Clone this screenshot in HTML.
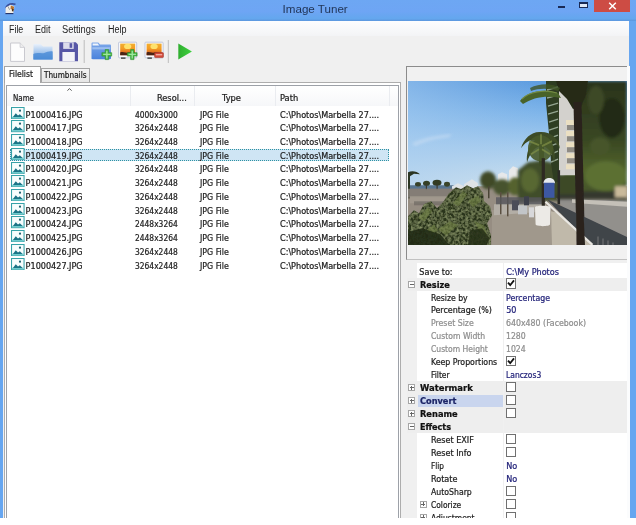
<!DOCTYPE html>
<html lang="en"><head><meta charset="utf-8"><title>Image Tuner</title>
<style>
html,body{margin:0;padding:0;background:#fff}
body{width:636px;height:525px;overflow:hidden;position:relative}
#win{position:absolute;left:0;top:0;width:636px;height:518px;background:#67a6f0;overflow:hidden;will-change:transform}
#win div,#win span,#win svg{position:absolute}
.grp,.row{left:0;top:0;width:0;height:0}
.t,.b,.bn,.g,.v,.m,.ttl{white-space:pre;line-height:12px;height:12px;transform-origin:0 0}
.t,.b,.bn,.g,.v{font-family:"DejaVu Sans Condensed","Liberation Sans",sans-serif;font-size:9px;color:#1c1c1c;-webkit-text-stroke:.22px}
.b{font-weight:bold;color:#111}
.bn{font-weight:bold;color:#1b2466}
.g{color:#8d8d8d}
.v{color:#23237a}
.m{font-family:"Liberation Sans",sans-serif;font-size:10px;color:#1e1e1e}
.ttl{font-family:"Liberation Sans",sans-serif;font-size:11.6px;color:#1f3354;line-height:14px;height:14px}
.cb{width:10px;height:10.3px;border:1px solid #707070;background:#fff;box-sizing:border-box}
.pm{width:7px;height:7px;border:1px solid #a6a6a6;background:#fff;box-sizing:border-box}
.pm:before{content:"";position:absolute;left:.5px;top:2px;width:4px;height:1px;background:#666}
.pm.plus:after{content:"";position:absolute;left:2px;top:.5px;width:1px;height:4px;background:#666}

</style></head><body>
<div id="win">
<div id="client" style="left:2.6px;top:20.5px;width:626.9px;height:498px;background:#f0f0f0"></div>
<div id="titlebar" class="grp">
<div id="titlebg" style="left:0;top:0;width:636px;height:20.5px;background:linear-gradient(#6da7f3,#6ea5f4 55%,#64a7ee 88%,#5c97de)"></div>
<svg id="appicon" style="left:0;top:0" width="20" height="18" viewBox="0 0 20 18"><path d="M5.600 8.200C7 5 10.500 3.200 15.500 4.300" fill="none" stroke="#3a4f9a" stroke-width="1.600"/><path d="M5.600 7.600L10.800 4.800L14.400 6.400L13.200 13.400H5.600z" fill="#f1efe9"/><path d="M10.800 5.400l3.400 1.300-.8 3.600-2.800-1.400z" fill="#b87432"/><path d="M12.200 8.600l1.600.6-.5 2.600-1.400-.8z" fill="#4a3018"/><path d="M5.400 13.600h8" stroke="#1e2e66" stroke-width="1.100"/><path d="M8 6.400l1.600 3.400" stroke="#8a8a8a" stroke-width=".8"/></svg>
<span id="t4" class="ttl" style="left:282.6px;top:2px">Image Tuner</span>
<div id="btn-min" style="left:558.4px;top:6.2px;width:6.4px;height:1.8px;background:#1a2a55"></div>
<div id="btn-max" style="left:579px;top:1.8px;width:9px;height:6.6px;border:1px solid #1a2a55;border-top-width:2px;box-sizing:border-box;background:#dfe9f7"></div>
<div id="btn-close" style="left:594px;top:0;width:36px;height:12.2px;background:#cd4c44"></div>
<svg id="btn-close-x" style="left:608px;top:2px" width="9" height="8" viewBox="0 0 9 8"><path d="M1.200 0.800L7.800 7.200M7.800 0.800L1.200 7.200" stroke="#fff" stroke-width="1.500" fill="none"/></svg>
</div>
<div id="menu" class="grp">
<div id="menubar" style="left:2.6px;top:20.5px;width:626.9px;height:15.5px;background:linear-gradient(#fdfdfe,#f3f4f6)"></div>
<span id="t0" class="m" style="left:8.5px;top:24px;transform:scaleX(0.887)">File</span>
<span id="t1" class="m" style="left:34.6px;top:24px;transform:scaleX(0.894)">Edit</span>
<span id="t2" class="m" style="left:62px;top:24px;transform:scaleX(0.930)">Settings</span>
<span id="t3" class="m" style="left:108.3px;top:24px;transform:scaleX(0.899)">Help</span>
</div>
<div id="tools" class="grp">
<svg id="toolbar" style="left:0;top:38px" width="200" height="28" viewBox="0 38 200 28">
<defs>
<linearGradient id="gfold" x1="0" y1="0" x2="0" y2="1"><stop offset="0" stop-color="#e9f1fb"/><stop offset=".5" stop-color="#a9c9ee"/><stop offset="1" stop-color="#4f8fd8"/></linearGradient>
<linearGradient id="gfold2" x1="0" y1="0" x2="0" y2="1"><stop offset="0" stop-color="#7ea9ea"/><stop offset="1" stop-color="#4a82dc"/></linearGradient>
<linearGradient id="gsun" x1="0" y1="0" x2="0" y2="1"><stop offset="0" stop-color="#f2b030"/><stop offset=".45" stop-color="#f39a22"/><stop offset="1" stop-color="#cf4a22"/></linearGradient>
<linearGradient id="gplay" x1="0" y1="0" x2="1" y2="0"><stop offset="0" stop-color="#2fae2f"/><stop offset="1" stop-color="#3fd13f"/></linearGradient>
</defs>
<!-- new -->
<path d="M10.600 43h9.500l4.400 4.400v14H10.600z" fill="#fdfdfd" stroke="#c9c9cf" stroke-width="1"/>
<path d="M20.100 43v4.400h4.400" fill="#eee" stroke="#c9c9cf" stroke-width=".8"/>
<!-- open -->
<path d="M33.5 44h7l2.5 2.5h9.5v13h-19z" fill="url(#gfold)"/>
<path d="M33.3 54c4-2 8 0 11-1s5-2 8.4-1.500v8H33.300z" fill="#4a8bd6" opacity=".8"/>
<!-- save -->
<path d="M59.3 42.3h16.5l2.2 2.2v16.7H59.3z" fill="#5757a6"/>
<rect x="63.2" y="42.3" width="10.5" height="6.6" fill="#dcdcec"/>
<rect x="69.6" y="43.2" width="2.6" height="4.6" fill="#5757a6"/>
<rect x="62.4" y="52" width="12.4" height="9.2" fill="#f4f4f8"/>
<!-- sep -->
<rect x="83.7" y="40" width="1" height="23" fill="#bdbdbd"/>
<!-- add folder -->
<path d="M91.5 43.6c0-.8.4-1.200 1.200-1.200h5.600l1.800 2.200h9.700c.8 0 1.200.4 1.200 1.200v12.200c0 .8-.4 1.200-1.200 1.200h-17.100c-.8 0-1.200-.4-1.200-1.200z" fill="url(#gfold2)"/>
<path d="M92.600 43.600h5.200l1.400 1.800h-6.600z" fill="#eef4fc"/>
<path d="M92.300 47.200h17.900v2.200h-17.900z" fill="#a9c8f2" opacity=".8"/>
<path d="M105.200 49.600h3.400v3.100h3.100v3.400h-3.100v3.500h-3.400v-3.500h-3.300v-3.400h3.300z" fill="#43b543" stroke="#2f8f2f" stroke-width=".6"/>
<path d="M106.200 50.800h1.300v3h3v1.200h-3v3.400h-1.300v-3.400h-3v-1.200h3z" fill="#9fe59f"/>
<!-- add image -->
<rect x="118.600" y="42.200" width="18.100" height="15.600" rx=".8" fill="#fbfbfd" stroke="#b4bcd4" stroke-width=".8"/>
<rect x="120.200" y="43.600" width="15" height="11.600" fill="url(#gsun)"/>
<ellipse cx="127.700" cy="46.400" rx="3.600" ry="2.600" fill="#ffe873" opacity=".9"/>
<path d="M120.200 52.400c2-.8 3.500-.4 5 .2s3.500-.8 5-.4 3.500.8 5 .2v2.800h-15z" fill="#4a2416"/>
<path d="M121 57.300h4.500v1.700h-4.500z" fill="#5a5a5a"/>
<path d="M130.600 49.600h3.400v3.100h3.100v3.400h-3.100v3.500h-3.400v-3.500h-3.300v-3.400h3.300z" fill="#43b543" stroke="#2f8f2f" stroke-width=".6"/>
<path d="M131.600 50.800h1.300v3h3v1.200h-3v3.400h-1.300v-3.400h-3v-1.200h3z" fill="#9fe59f"/>
<!-- remove image -->
<rect x="145" y="42.200" width="18.100" height="15.600" rx=".8" fill="#fbfbfd" stroke="#b4bcd4" stroke-width=".8"/>
<rect x="146.600" y="43.600" width="15" height="11.600" fill="url(#gsun)"/>
<ellipse cx="154.100" cy="46.400" rx="3.600" ry="2.600" fill="#ffe873" opacity=".9"/>
<path d="M146.600 52.400c2-.8 3.500-.4 5 .2s3.500-.8 5-.4 3.500.8 5 .2v2.800h-15z" fill="#4a2416"/>
<path d="M147.400 57.300h4.500v1.700h-4.500z" fill="#5a5a5a"/>
<rect x="154.600" y="52.600" width="8.800" height="5" rx=".8" fill="#d24a3a" stroke="#a8362a" stroke-width=".6"/>
<rect x="155.800" y="54" width="6.400" height="1.400" fill="#f2a69c"/>
<!-- sep -->
<rect x="167.800" y="40" width="1" height="23" fill="#bdbdbd"/>
<!-- play -->
<path d="M178.3 43.5l13.6 8-13.6 8z" fill="url(#gplay)"/>
</svg>
</div>
<div id="tabs" class="grp">
<div id="tabpage" style="left:3.5px;top:82.2px;width:397.3px;height:440px;background:#fff;border:1px solid #adadad;box-sizing:border-box"></div>
<div id="tab2" style="left:40.5px;top:67.8px;width:49.3px;height:14.7px;background:linear-gradient(#f4f4f4,#e6e6e6);border:1px solid #a5a5a5;border-bottom:none;box-sizing:border-box"></div>
<div id="tab1" style="left:3.5px;top:65.7px;width:37px;height:17.6px;background:#fff;border:1px solid #a5a5a5;border-bottom:none;box-sizing:border-box"></div>
<span id="t5" class="t" style="left:9px;top:68px;transform:scaleX(0.945)">Filelist</span>
<span id="t6" class="t" style="left:44px;top:69px;transform:scaleX(0.903)">Thumbnails</span>
</div>
<div id="filelist" class="grp">
<div id="list" style="left:6.3px;top:85.3px;width:392.5px;height:440px;background:#fff;border:1px solid #9da1a8;box-sizing:border-box"></div>
<div id="lhead" class="grp">
<div id="lhdr" style="left:7.3px;top:86.3px;width:390.5px;height:19.5px;background:linear-gradient(#ffffff,#f6f7f9)"></div>
<div class="colsep" style="left:129.8px;top:86.3px;width:1px;height:19.5px;background:#eaecf0"></div>
<div class="colsep" style="left:194px;top:86.3px;width:1px;height:19.5px;background:#eaecf0"></div>
<div class="colsep" style="left:274.5px;top:86.3px;width:1px;height:19.5px;background:#eaecf0"></div>
<div class="colsep" style="left:389px;top:86.3px;width:1px;height:19.5px;background:#eaecf0"></div>
<svg id="sortarrow" style="left:66.8px;top:88.4px" width="5" height="3" viewBox="0 0 5 3"><path d="M0.400 2.700L2.500 0.600L4.600 2.700" fill="none" stroke="#555" stroke-width="1"/></svg>
<span id="t7" class="t" style="left:12.9px;top:92px;transform:scaleX(0.879)">Name</span>
<span id="t8" class="t" style="left:157px;top:92px;transform:scaleX(1.016)">Resol...</span>
<span id="t9" class="t" style="left:222.2px;top:92px;transform:scaleX(1.029)">Type</span>
<span id="t10" class="t" style="left:280px;top:92px;transform:scaleX(1.025)">Path</span>
</div>
<svg width="0" height="0" style="left:0;top:0"><defs><g id="ico"><rect x=".5" y=".5" width="11.800" height="11" fill="#f8fdfd" stroke="#37a2a8" stroke-width="1"/><rect x="1" y="9.600" width="10.800" height="1.500" fill="#6ecacd"/><path d="M1.800 9.900L4.500 6.100L6.600 8.300L8.300 7.200L11 9.900z" fill="#1b7486"/><rect x="7.500" y="2.600" width="1.900" height="1.900" fill="#1f6674"/></g></defs></svg>
<div class="row">
<svg class="fico" style="left:11.2px;top:106.6px" width="13.6" height="12.2" viewBox="0 0 12.8 12" preserveAspectRatio="none"><use href="#ico"/></svg>
<span id="t11" class="t" style="left:25.6px;top:109px">P1000416.JPG</span>
<span id="t12" class="t" style="left:135px;top:109px;transform:scaleX(0.930)">4000x3000</span>
<span id="t13" class="t" style="left:199.7px;top:109px;transform:scaleX(0.973)">JPG File</span>
<span id="t14" class="t" style="left:280px;top:109px">C:\Photos\Marbella 27....</span>
</div>
<div class="row">
<svg class="fico" style="left:11.2px;top:120.33px" width="13.6" height="12.2" viewBox="0 0 12.8 12" preserveAspectRatio="none"><use href="#ico"/></svg>
<span id="t15" class="t" style="left:25.6px;top:122px">P1000417.JPG</span>
<span id="t16" class="t" style="left:135px;top:122px;transform:scaleX(0.930)">3264x2448</span>
<span id="t17" class="t" style="left:199.7px;top:122px;transform:scaleX(0.973)">JPG File</span>
<span id="t18" class="t" style="left:280px;top:122px">C:\Photos\Marbella 27....</span>
</div>
<div class="row">
<svg class="fico" style="left:11.2px;top:134.06px" width="13.6" height="12.2" viewBox="0 0 12.8 12" preserveAspectRatio="none"><use href="#ico"/></svg>
<span id="t19" class="t" style="left:25.6px;top:136px">P1000418.JPG</span>
<span id="t20" class="t" style="left:135px;top:136px;transform:scaleX(0.930)">3264x2448</span>
<span id="t21" class="t" style="left:199.7px;top:136px;transform:scaleX(0.973)">JPG File</span>
<span id="t22" class="t" style="left:280px;top:136px">C:\Photos\Marbella 27....</span>
</div>
<div class="row sel">
<div id="sel" style="left:9.7px;top:148.89px;width:379.5px;height:12.4px;background:#cfe5f4;border:1px dotted #2f93a3;box-sizing:border-box"></div>
<svg class="fico" style="left:11.2px;top:147.79px" width="13.6" height="12.2" viewBox="0 0 12.8 12" preserveAspectRatio="none"><use href="#ico"/></svg>
<span id="t23" class="t" style="left:25.6px;top:150px">P1000419.JPG</span>
<span id="t24" class="t" style="left:135px;top:150px;transform:scaleX(0.930)">3264x2448</span>
<span id="t25" class="t" style="left:199.7px;top:150px;transform:scaleX(0.973)">JPG File</span>
<span id="t26" class="t" style="left:280px;top:150px">C:\Photos\Marbella 27....</span>
</div>
<div class="row">
<svg class="fico" style="left:11.2px;top:161.52px" width="13.6" height="12.2" viewBox="0 0 12.8 12" preserveAspectRatio="none"><use href="#ico"/></svg>
<span id="t27" class="t" style="left:25.6px;top:163px">P1000420.JPG</span>
<span id="t28" class="t" style="left:135px;top:163px;transform:scaleX(0.930)">3264x2448</span>
<span id="t29" class="t" style="left:199.7px;top:163px;transform:scaleX(0.973)">JPG File</span>
<span id="t30" class="t" style="left:280px;top:163px">C:\Photos\Marbella 27....</span>
</div>
<div class="row">
<svg class="fico" style="left:11.2px;top:175.25px" width="13.6" height="12.2" viewBox="0 0 12.8 12" preserveAspectRatio="none"><use href="#ico"/></svg>
<span id="t31" class="t" style="left:25.6px;top:177px">P1000421.JPG</span>
<span id="t32" class="t" style="left:135px;top:177px;transform:scaleX(0.930)">3264x2448</span>
<span id="t33" class="t" style="left:199.7px;top:177px;transform:scaleX(0.973)">JPG File</span>
<span id="t34" class="t" style="left:280px;top:177px">C:\Photos\Marbella 27....</span>
</div>
<div class="row">
<svg class="fico" style="left:11.2px;top:188.98px" width="13.6" height="12.2" viewBox="0 0 12.8 12" preserveAspectRatio="none"><use href="#ico"/></svg>
<span id="t35" class="t" style="left:25.6px;top:191px">P1000422.JPG</span>
<span id="t36" class="t" style="left:135px;top:191px;transform:scaleX(0.930)">3264x2448</span>
<span id="t37" class="t" style="left:199.7px;top:191px;transform:scaleX(0.973)">JPG File</span>
<span id="t38" class="t" style="left:280px;top:191px">C:\Photos\Marbella 27....</span>
</div>
<div class="row">
<svg class="fico" style="left:11.2px;top:202.71px" width="13.6" height="12.2" viewBox="0 0 12.8 12" preserveAspectRatio="none"><use href="#ico"/></svg>
<span id="t39" class="t" style="left:25.6px;top:205px">P1000423.JPG</span>
<span id="t40" class="t" style="left:135px;top:205px;transform:scaleX(0.930)">3264x2448</span>
<span id="t41" class="t" style="left:199.7px;top:205px;transform:scaleX(0.973)">JPG File</span>
<span id="t42" class="t" style="left:280px;top:205px">C:\Photos\Marbella 27....</span>
</div>
<div class="row">
<svg class="fico" style="left:11.2px;top:216.44px" width="13.6" height="12.2" viewBox="0 0 12.8 12" preserveAspectRatio="none"><use href="#ico"/></svg>
<span id="t43" class="t" style="left:25.6px;top:218px">P1000424.JPG</span>
<span id="t44" class="t" style="left:135px;top:218px;transform:scaleX(0.930)">2448x3264</span>
<span id="t45" class="t" style="left:199.7px;top:218px;transform:scaleX(0.973)">JPG File</span>
<span id="t46" class="t" style="left:280px;top:218px">C:\Photos\Marbella 27....</span>
</div>
<div class="row">
<svg class="fico" style="left:11.2px;top:230.17px" width="13.6" height="12.2" viewBox="0 0 12.8 12" preserveAspectRatio="none"><use href="#ico"/></svg>
<span id="t47" class="t" style="left:25.6px;top:232px">P1000425.JPG</span>
<span id="t48" class="t" style="left:135px;top:232px;transform:scaleX(0.930)">2448x3264</span>
<span id="t49" class="t" style="left:199.7px;top:232px;transform:scaleX(0.973)">JPG File</span>
<span id="t50" class="t" style="left:280px;top:232px">C:\Photos\Marbella 27....</span>
</div>
<div class="row">
<svg class="fico" style="left:11.2px;top:243.9px" width="13.6" height="12.2" viewBox="0 0 12.8 12" preserveAspectRatio="none"><use href="#ico"/></svg>
<span id="t51" class="t" style="left:25.6px;top:246px">P1000426.JPG</span>
<span id="t52" class="t" style="left:135px;top:246px;transform:scaleX(0.930)">3264x2448</span>
<span id="t53" class="t" style="left:199.7px;top:246px;transform:scaleX(0.973)">JPG File</span>
<span id="t54" class="t" style="left:280px;top:246px">C:\Photos\Marbella 27....</span>
</div>
<div class="row">
<svg class="fico" style="left:11.2px;top:257.63px" width="13.6" height="12.2" viewBox="0 0 12.8 12" preserveAspectRatio="none"><use href="#ico"/></svg>
<span id="t55" class="t" style="left:25.6px;top:260px">P1000427.JPG</span>
<span id="t56" class="t" style="left:135px;top:260px;transform:scaleX(0.930)">3264x2448</span>
<span id="t57" class="t" style="left:199.7px;top:260px;transform:scaleX(0.973)">JPG File</span>
<span id="t58" class="t" style="left:280px;top:260px">C:\Photos\Marbella 27....</span>
</div>
</div>
<div id="previewpane" class="grp">
<div id="preview" style="left:406px;top:66px;width:223.5px;height:193.6px;background:#f1f1f1;border:1px solid #8c8c8c;border-right:none;border-bottom-color:#c2c2c2;box-sizing:border-box"></div>
<svg id="photo" style="left:408px;top:80.5px" width="219" height="164" viewBox="408 81 219 163.6" preserveAspectRatio="none">
<defs>
<linearGradient id="sky" x1="0" y1="0" x2="0" y2="1"><stop offset="0" stop-color="#5c9ce0"/><stop offset=".3" stop-color="#80b6ea"/><stop offset=".6" stop-color="#a6ccee"/><stop offset=".85" stop-color="#c2dbee"/><stop offset="1" stop-color="#d0e2ee"/></linearGradient>
<linearGradient id="skyx" x1="0" y1="0" x2="1" y2="0"><stop offset="0" stop-color="#a8cdf0" stop-opacity=".5"/><stop offset=".6" stop-color="#a4c6ea" stop-opacity="0"/></linearGradient>
<linearGradient id="trees" x1="0" y1="0" x2="0" y2="1"><stop offset="0" stop-color="#2a331c"/><stop offset=".5" stop-color="#394722"/><stop offset=".75" stop-color="#52652c"/><stop offset="1" stop-color="#3e4a28"/></linearGradient>
<filter id="bl" x="-5%" y="-5%" width="110%" height="110%"><feGaussianBlur stdDeviation=".7"/></filter>
<filter id="bl2" x="-5%" y="-5%" width="110%" height="110%"><feGaussianBlur stdDeviation="1.4"/></filter>
<filter id="tex" x="0" y="0" width="100%" height="100%"><feTurbulence type="fractalNoise" baseFrequency=".35" numOctaves="2" seed="7" result="n"/><feColorMatrix in="n" type="matrix" values="0 0 0 0 0.36  0 0 0 0 0.43  0 0 0 0 0.2  0.9 0.9 0 0 -0.72" result="c"/><feComposite in="c" in2="SourceGraphic" operator="in" result="m"/><feMerge><feMergeNode in="SourceGraphic"/><feMergeNode in="m"/></feMerge></filter>
<clipPath id="pc"><rect x="408" y="81" width="219" height="163.6"/></clipPath>
</defs>
<g clip-path="url(#pc)">
<rect x="408" y="81" width="219" height="108" fill="url(#sky)"/>
<rect x="408" y="81" width="219" height="108" fill="url(#skyx)"/>
<path d="M412 143c10-5 24-8 40-9l-3 3c-12 1-24 4-34 9z" fill="#c2daf2" opacity=".75" filter="url(#bl2)"/>
<!-- ground -->
<rect x="408" y="186" width="219" height="59" fill="#968d82"/>
<g filter="url(#bl)">
<!-- sea -->
<rect x="408" y="185" width="50" height="3.500" fill="#58748f"/>
<!-- distant buildings -->
<path d="M452 192v-6l6-3 6 3v-2l8-5 6 4v9z" fill="#dfe3e6"/>
<path d="M498 182v-8l4-2 5 2v8z" fill="#e6e8ea"/>
<path d="M509 190v-20l4-4 5 2v22z" fill="#e8e9ea"/>
<!-- distant palms -->
<path d="M408 172c4-2 9-1 12 2l-6-.5-4 2.500v22h-2z" fill="#2c3522"/>
<ellipse cx="418" cy="184" rx="3" ry="2.200" fill="#38422c"/>
<ellipse cx="426.500" cy="183" rx="3.500" ry="2.600" fill="#343f28"/>
<ellipse cx="437" cy="182.500" rx="4.500" ry="3" fill="#303a24"/>
<ellipse cx="447" cy="184" rx="3" ry="2.400" fill="#3a452c"/>
<rect x="425.800" y="184" width="1.200" height="6" fill="#3a3a30"/>
<rect x="436.500" y="184" width="1.200" height="6" fill="#3a3a30"/>
<!-- beach clutter -->
<rect x="408" y="188.500" width="66" height="9" fill="#827c75" opacity=".9"/>
<rect x="410" y="196" width="46" height="7" fill="#a29a8e" opacity=".9"/>
<rect x="414" y="201" width="30" height="4" fill="#6f6a62" opacity=".7"/>
</g>
<!-- path right of beach -->
<path d="M492 210l54-7 12 42h-66z" fill="#a0988c"/><path d="M494 204l50-3 4 10-54 4z" fill="#b3aea6" filter="url(#bl)"/>
<!-- mid trees -->
<g filter="url(#bl2)">
<ellipse cx="488" cy="180" rx="8" ry="9" fill="#3f4a28"/>
<ellipse cx="502" cy="187" rx="9" ry="8" fill="#47532d"/>
<ellipse cx="515" cy="186" rx="7" ry="9" fill="#55622f"/>
<path d="M518 170l10-8 14-2 18 4v36l-42 2z" fill="#414d29"/>
<ellipse cx="530" cy="180" rx="9" ry="12" fill="#586830"/>
</g>
<g filter="url(#bl)">
<rect x="500" y="192" width="1.500" height="22" fill="#5a5040"/>
<rect x="507" y="192" width="1.500" height="24" fill="#5a5040"/>
<rect x="488" y="186" width="1.500" height="12" fill="#4a4436"/>
<!-- people / stuff on promenade -->
<rect x="496" y="197" width="48" height="7" fill="#55565c" opacity=".8"/>
<rect x="512" y="200" width="7" height="10" fill="#4c4d58"/>
<rect x="518" y="205" width="9" height="9" fill="#c2c5c8"/>
<rect x="524" y="196" width="5" height="9" fill="#3e404c"/>
<rect x="529" y="207" width="5" height="10" fill="#d8d8da"/>
</g>
<!-- road -->
<path d="M556 198l71 2v44.600h-34z" fill="#92908c"/>
<!-- right trees -->
<g filter="url(#bl2)">
<path d="M580 81h47v119l-50-3-18-1 1-18 8-10 6-20z" fill="url(#trees)"/>
<ellipse cx="606" cy="176" rx="21" ry="15" fill="#5c7032"/>
<ellipse cx="570" cy="184" rx="11" ry="10" fill="#4f612c"/>
<ellipse cx="612" cy="118" rx="13" ry="20" fill="#232b17"/>
<ellipse cx="596" cy="100" rx="8" ry="14" fill="#3d4a26"/>
<ellipse cx="600" cy="146" rx="10" ry="9" fill="#46552a"/>
<rect x="556" y="191" width="71" height="8" fill="#35382d"/>
<rect x="556" y="174" width="24" height="20" fill="#3c4927"/>
<rect x="615" y="186" width="12" height="11" fill="#c9b99a"/>
</g>
<path d="M572 199l55 2.500v5l-55-4z" fill="#c4c0b8" filter="url(#bl)"/>
<!-- building -->
<g filter="url(#bl)">
<path d="M559 81h18v94h-18z" fill="#d3d1cd"/>
<path d="M566 120h10v5h-10zM566 131h10v5h-10zM566 142h10v5h-10zM566 153h10v5h-10zM566 164h10v5h-10z" fill="#ebdfc2"/>
<path d="M567 125h9v5h-9zM567 136h9v5h-9zM567 147h9v5h-9zM567 158h9v5h-9z" fill="#8f8b84"/>
<!-- striped frond -->
<path d="M546 81h13v100l-5 2-3-20-2-30-3-30z" fill="#2f3c22"/>
<path d="M547 90l11-3M547 98l11-3M548 106l10-3M548 114l10-3M549 122l9-3M549 130l9-3M550 138l8-3M550 146l8-3M551 154l7-3M551 162l7-3" stroke="#93a590" stroke-width="1.400"/>
<!-- tall palm crown -->
<path d="M556 81h32l-2 14-5 12-8 2-6-10-8-8z" fill="#262c19"/>
<path d="M520 101c6-9 23-13 38-8l3 5c-14-3-28-1-38 6z" fill="#4a6429"/><path d="M522 99c7-7 22-10 35-6" stroke="#7d9548" stroke-width="1.200" fill="none" opacity=".8"/>
<path d="M530 88c10-5 22-5 30 0l-2 3c-9-3-19-3-27 0z" fill="#3e5426" opacity=".8"/>
<!-- tall trunk -->
<path d="M573.500 102h8l3.500 142.600h-8.500z" fill="#2a241e"/>
</g>
<!-- mid palm -->
<g filter="url(#bl)">
<path transform="translate(3,0)" d="M538 132c-9-1-17 6-20 16 5-7 10-9 14-8-6 5-9 13-8 22 3-9 7-14 12-16l0 20 5 0 0-20c5 2 9 8 10 16 2-9 0-17-5-22 5 0 9 4 11 9-1-10-8-17-19-17z" fill="#3c4c25"/>
<ellipse cx="540.500" cy="148" rx="12.500" ry="13" fill="#485a2a" opacity=".9"/>
<path transform="translate(3,0)" d="M526 141l10 4M549 141l-10 5M528 154l8-5M547 154l-8-5M538 134v10" stroke="#7d8d46" stroke-width="1.800" opacity=".75"/>
<rect x="541.700" y="158" width="3.200" height="48" fill="#2e2a22"/>
<rect x="557.500" y="170" width="2.600" height="34" fill="#2c2a26"/>
<!-- kiosk -->
<path d="M543.500 183c0-7 11.500-7 11.500 0z" fill="#e6eaee"/>
<rect x="544" y="182.500" width="10.500" height="15" fill="#3c59a2"/>
</g>
<!-- fence & wall -->
<path d="M547 199l80 37.500v8.500h-36z" fill="#40444a" filter="url(#bl)"/><path d="M598 236v9M603 238v7M608 240v5M613 242v3" stroke="#8d8c8e" stroke-width="1.200" opacity=".6"/>
<path d="M551 211l9 2 32 31.600h-40z" fill="#c0b9aa"/>
<path d="M545.500 201.500l47 43" stroke="#e9e7e2" stroke-width="2.200" fill="none"/>
<!-- planter -->
<path d="M535 207c0-2 15.600-2 15.600 0l-.6 17c0 2.500-14.400 2.500-14.400 0z" fill="#eceae6" filter="url(#bl)"/>
<!-- foreground palms -->
<g filter="url(#bl)">
<g filter="url(#tex)" transform="translate(0,4)">
<path d="M408 212l6-6 5 3 5-9 7-3 6 7 6-6 6-9 7-6 5 2 6-4 6 3 5-2 5 7 1 8 6 5 2 9-5 8 4 12v13.600h-94z" fill="#2b361b"/>
</g>
<path transform="translate(0,4)" d="M418 214l10-11 4 4-8 10zM453 199l10-12 4 3-8 12zM468 197l10-6 3 6-8 6zM438 225l12-8 8 4-12 10zM474 217l10 4 4 12-8-6zM426 226l8-6 4 6-8 6z" fill="#6f8144" opacity=".6"/>
<path d="M408 232l14-4 18 6 10 11h-42z" fill="#222b16" opacity=".9"/>
<path d="M470 230l12-2 8 10-4 7h-18z" fill="#262f18" opacity=".85"/>
</g>
<!-- trunk again on top -->
<path d="M576 190l6.500 0 2.500 54.600h-8.500z" fill="#2a241e" filter="url(#bl)"/>
</g>
</svg>
<div id="redge" style="left:627px;top:66px;width:2.6px;height:460px;background:#fbfcfd"></div>
</div>
<div id="propgrid" class="grp">
<div id="grid" style="left:406.5px;top:263px;width:220.5px;height:262px;background:#fff"></div>
<div id="gridmargin" style="left:406.5px;top:263px;width:10.5px;height:262px;background:#f0f0f0"></div>
<div class="cat" style="left:406.5px;top:277.65px;width:220.5px;height:12.9px;background:#eeeeee"></div>
<div class="cat" style="left:406.5px;top:381.25px;width:220.5px;height:12.9px;background:#eeeeee"></div>
<div class="cat" style="left:406.5px;top:394.2px;width:220.5px;height:12.9px;background:#eeeeee"></div>
<div class="cat" style="left:406.5px;top:407.15px;width:220.5px;height:12.9px;background:#eeeeee"></div>
<div class="cat" style="left:406.5px;top:420.1px;width:220.5px;height:12.9px;background:#eeeeee"></div>
<div id="gsel" style="left:418px;top:394.5px;width:85px;height:12.2px;background:#c9d5ee"></div>
<div id="gsplit" style="left:503px;top:263px;width:1px;height:260px;background:#f0f0f0"></div>
<div class="cb" style="left:506.3px;top:278.45px"></div>
<svg class="ck" style="left:507.3px;top:279.45px" width="8" height="8" viewBox="0 0 8 8"><path d="M1 3.600L3.200 6.200L7 1.400" fill="none" stroke="#111" stroke-width="1.800"/></svg>
<div class="cb" style="left:506.3px;top:356.15px"></div>
<svg class="ck" style="left:507.3px;top:357.15px" width="8" height="8" viewBox="0 0 8 8"><path d="M1 3.600L3.200 6.200L7 1.400" fill="none" stroke="#111" stroke-width="1.800"/></svg>
<div class="cb" style="left:506.3px;top:382.05px"></div>
<div class="cb" style="left:506.3px;top:395px"></div>
<div class="cb" style="left:506.3px;top:407.95px"></div>
<div class="cb" style="left:506.3px;top:433.85px"></div>
<div class="cb" style="left:506.3px;top:446.8px"></div>
<div class="cb" style="left:506.3px;top:485.65px"></div>
<div class="cb" style="left:506.3px;top:498.6px"></div>
<div class="cb" style="left:506.3px;top:511.55px"></div>
<div class="pm" style="left:408.2px;top:280.55px"></div>
<div class="pm plus" style="left:408.2px;top:384.15px"></div>
<div class="pm plus" style="left:408.2px;top:397.1px"></div>
<div class="pm plus" style="left:408.2px;top:410.05px"></div>
<div class="pm" style="left:408.2px;top:423px"></div>
<div class="pm plus" style="left:419.6px;top:500.7px"></div>
<div class="pm plus" style="left:419.6px;top:513.65px"></div>
<span id="t59" class="t" style="left:419.3px;top:266px">Save to:</span>
<span id="t60" class="v" style="left:506.2px;top:266px">C:\My Photos</span>
<span id="t61" class="b" style="left:419.9px;top:279px;transform:scaleX(1.012)">Resize</span>
<span id="t62" class="t" style="left:431px;top:292px;transform:scaleX(0.955)">Resize by</span>
<span id="t63" class="v" style="left:506.2px;top:292px;transform:scaleX(0.967)">Percentage</span>
<span id="t64" class="t" style="left:431px;top:304px;transform:scaleX(0.982)">Percentage (%)</span>
<span id="t65" class="v" style="left:506.2px;top:304px">50</span>
<span id="t66" class="g" style="left:431px;top:317px;transform:scaleX(0.961)">Preset Size</span>
<span id="t67" class="g" style="left:506.2px;top:317px;transform:scaleX(0.969)">640x480 (Facebook)</span>
<span id="t68" class="g" style="left:431px;top:330px;transform:scaleX(0.949)">Custom Width</span>
<span id="t69" class="g" style="left:506.2px;top:330px;transform:scaleX(0.956)">1280</span>
<span id="t70" class="g" style="left:431px;top:343px;transform:scaleX(0.941)">Custom Height</span>
<span id="t71" class="g" style="left:506.2px;top:343px;transform:scaleX(0.956)">1024</span>
<span id="t72" class="t" style="left:431px;top:356px;transform:scaleX(0.966)">Keep Proportions</span>
<span id="t73" class="t" style="left:431px;top:369px;transform:scaleX(0.930)">Filter</span>
<span id="t74" class="v" style="left:506.2px;top:369px;transform:scaleX(0.938)">Lanczos3</span>
<span id="t75" class="b" style="left:419.9px;top:382px;transform:scaleX(1.041)">Watermark</span>
<span id="t76" class="bn" style="left:419.9px;top:395px;transform:scaleX(1.013)">Convert</span>
<span id="t77" class="b" style="left:419.9px;top:408px;transform:scaleX(1.022)">Rename</span>
<span id="t78" class="b" style="left:419.9px;top:421px">Effects</span>
<span id="t79" class="t" style="left:431px;top:434px">Reset EXIF</span>
<span id="t80" class="t" style="left:431px;top:447px">Reset Info</span>
<span id="t81" class="t" style="left:431px;top:460px;transform:scaleX(0.908)">Flip</span>
<span id="t82" class="v" style="left:506.2px;top:460px">No</span>
<span id="t83" class="t" style="left:431px;top:473px">Rotate</span>
<span id="t84" class="v" style="left:506.2px;top:473px">No</span>
<span id="t85" class="t" style="left:431px;top:486px;transform:scaleX(0.960)">AutoSharp</span>
<span id="t86" class="t" style="left:431px;top:499px;transform:scaleX(0.926)">Colorize</span>
<span id="t87" class="t" style="left:431px;top:512px;transform:scaleX(0.938)">Adjustment</span>
</div>
</div>
</body></html>
